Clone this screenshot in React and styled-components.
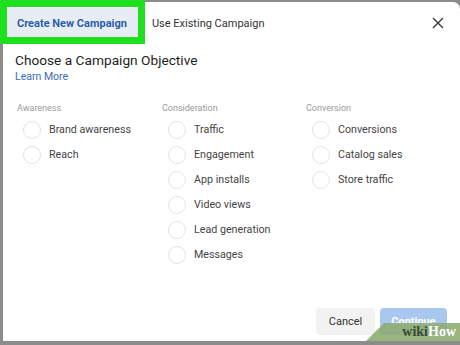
import React from 'react';
import styled, { createGlobalStyle } from 'styled-components';

const GlobalStyle = createGlobalStyle`
  html, body {
    margin: 0;
    padding: 0;
    background: #8c8c8c;
    font-family: Roboto, 'Liberation Sans', sans-serif;
  }
`;

const columns = [
  { title: 'Awareness', items: ['Brand awareness', 'Reach'] },
  {
    title: 'Consideration',
    items: ['Traffic', 'Engagement', 'App installs', 'Video views', 'Lead generation', 'Messages'],
  },
  { title: 'Conversion', items: ['Conversions', 'Catalog sales', 'Store traffic'] },
];

const App = () => {
  return (
    <>
      <GlobalStyle />
      <Screen>
        <Dialog>
          <TabBar>
            <Tab active>Create New Campaign</Tab>
            <Tab>Use Existing Campaign</Tab>
            <CloseButton aria-label="close">
              <svg width="12" height="12" viewBox="0 0 12 12">
                <path d="M1 1 L11 11 M11 1 L1 11" stroke="#333" strokeWidth="1.3" fill="none" />
              </svg>
            </CloseButton>
          </TabBar>
          <Highlight />
          <Header>
            <Title>Choose a Campaign Objective</Title>
            <LearnMore>Learn More</LearnMore>
          </Header>
          <Columns>
            {columns.map(col => (
              <Column key={col.title}>
                <ColumnTitle>{col.title}</ColumnTitle>
                {col.items.map(item => (
                  <Option key={item}>
                    <Radio />
                    <OptionLabel>{item}</OptionLabel>
                  </Option>
                ))}
              </Column>
            ))}
          </Columns>
          <Footer>
            <Button width="59px">Cancel</Button>
            <Button primary width="67px">Continue</Button>
          </Footer>
          <Watermark>wiki<HowText>How</HowText></Watermark>
        </Dialog>
      </Screen>
    </>
  );
};

const Screen = styled.div`
  width: 460px;
  height: 345px;
  overflow: hidden;
  padding: 2px 0 0 3px;
  box-sizing: border-box;
`;

const Dialog = styled.div`
  position: relative;
  width: 457px;
  height: 339px;
  background: #fff;
  border-top-right-radius: 7px;
  display: flex;
  flex-direction: column;
`;

const TabBar = styled.div`
  display: flex;
  align-items: center;
  height: 34px;
  padding: 4px 0 0 4px;
`;

const Tab = styled.div`
  height: 30px;
  display: flex;
  align-items: center;
  padding: ${props => (props.active ? '0 12px 0 10px' : '0 10px')};
  font-size: 11px;
  color: ${props => (props.active ? '#2b5fab' : '#333')};
  font-weight: ${props => (props.active ? 700 : 400)};
  background: ${props => (props.active ? '#e8edf4' : 'transparent')};
  margin-right: ${props => (props.active ? '3px' : '0')};
`;

const CloseButton = styled.div`
  margin-left: auto;
  margin-right: 16px;
  display: flex;
  align-items: center;
`;

const Highlight = styled.div`
  position: absolute;
  left: -3px;
  top: -2px;
  width: 145px;
  height: 44px;
  border: 7px solid #1fe01f;
  box-sizing: border-box;
`;

const Header = styled.div`
  padding: 12px 12px 0;
`;

const Title = styled.div`
  font-size: 13.7px;
  color: #1c1e21;
  line-height: 17px;
`;

const LearnMore = styled.div`
  font-size: 10.5px;
  color: #3b6bb5;
  margin-top: 1px;
`;

const Columns = styled.div`
  display: grid;
  grid-template-columns: 145px 144px 1fr;
  padding: 20px 0 0 14px;
`;

const Column = styled.div`
  display: flex;
  flex-direction: column;
`;

const ColumnTitle = styled.div`
  font-size: 9px;
  color: #999;
  height: 12px;
  margin-bottom: 2px;
`;

const Option = styled.div`
  display: flex;
  align-items: center;
  height: 25px;
  padding-left: 6px;
`;

const Radio = styled.div`
  width: 18px;
  height: 18px;
  border-radius: 50%;
  border: 1px solid #e3e3e3;
  box-sizing: border-box;
  margin-right: 8px;
`;

const OptionLabel = styled.div`
  font-size: 10.7px;
  color: #444;
`;

const Footer = styled.div`
  margin-top: auto;
  display: flex;
  justify-content: flex-end;
  gap: 5px;
  padding: 0 13px 6px 0;
`;

const Button = styled.div`
  width: ${props => props.width};
  height: 27px;
  display: flex;
  align-items: center;
  justify-content: center;
  border-radius: 4px;
  font-size: 11px;
  color: ${props => (props.primary ? '#fff' : '#333')};
  background: ${props => (props.primary ? '#a9c8f0' : '#f2f2f2')};
  font-weight: ${props => (props.primary ? 700 : 400)};
`;

const Watermark = styled.div`
  position: absolute;
  right: 0;
  bottom: 0;
  width: 94px;
  height: 18px;
  background: rgba(140, 170, 110, 0.88);
  clip-path: polygon(18px 0, 100% 0, 100% 100%, 0 100%);
  display: flex;
  align-items: center;
  justify-content: flex-end;
  padding-right: 4px;
  box-sizing: border-box;
  font-family: 'Liberation Serif', serif;
  font-weight: 700;
  font-size: 14px;
  color: #3d4a36;
`;

const HowText = styled.span`
  color: #fff;
`;

export default App;
